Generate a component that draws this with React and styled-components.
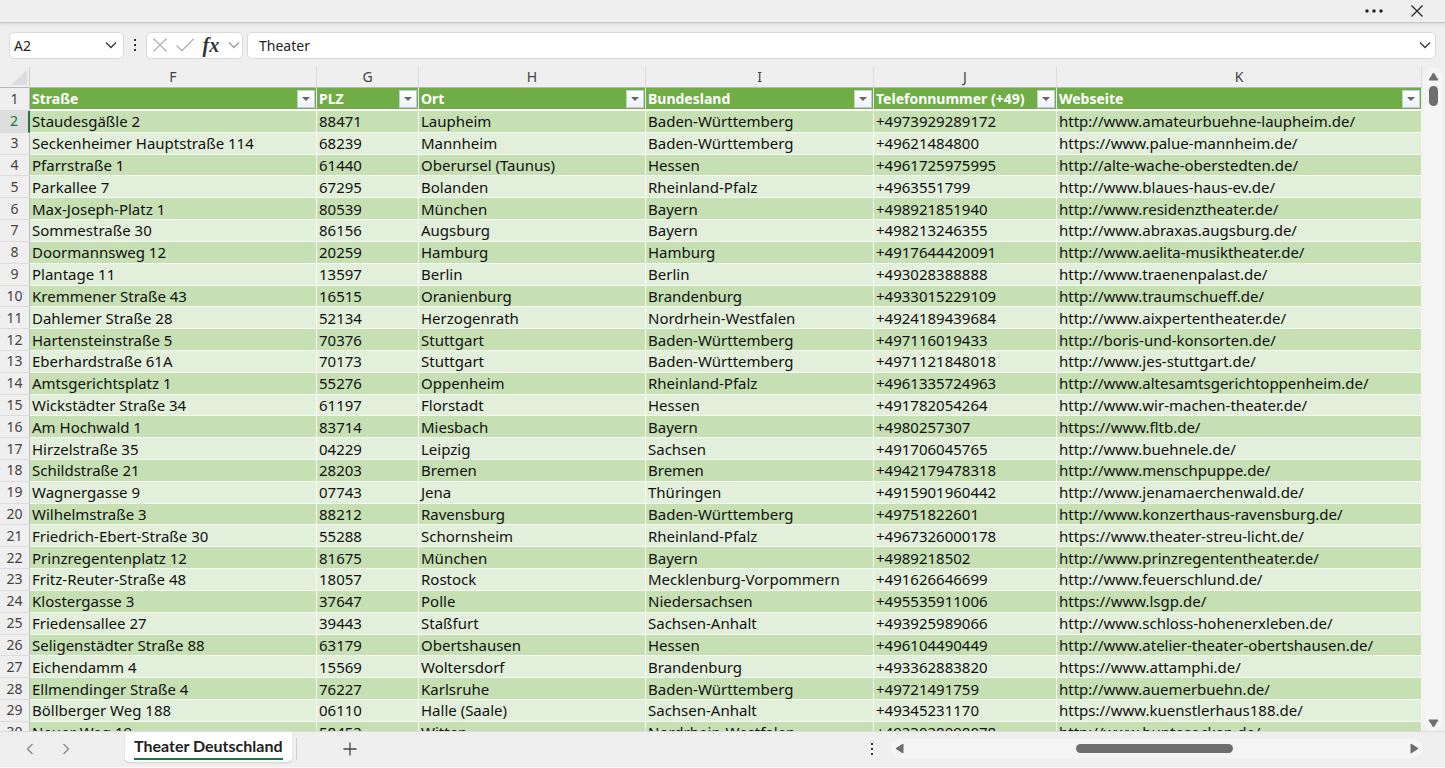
import React from "react";
import styled, { createGlobalStyle } from "styled-components";

const GlobalStyle = createGlobalStyle`
  * {
    box-sizing: border-box;
  }
  body {
    margin: 0;
    background: #efefef;
    font-family: "Noto Sans", "Open Sans", sans-serif;
  }
  button, input {
    font: inherit;
    color: inherit;
    border: none;
    background: none;
    padding: 0;
    outline: none;
  }
`;

const columns = [
  { letter: "F", name: "Straße", width: 287 },
  { letter: "G", name: "PLZ", width: 102 },
  { letter: "H", name: "Ort", width: 227 },
  { letter: "I", name: "Bundesland", width: 228 },
  { letter: "J", name: "Telefonnummer (+49)", width: 183 },
  { letter: "K", name: "Webseite" },
];

const rows = [
  ["Staudesgäßle 2", "88471", "Laupheim", "Baden-Württemberg", "+4973929289172", "http://www.amateurbuehne-laupheim.de/"],
  ["Seckenheimer Hauptstraße 114", "68239", "Mannheim", "Baden-Württemberg", "+49621484800", "https://www.palue-mannheim.de/"],
  ["Pfarrstraße 1", "61440", "Oberursel (Taunus)", "Hessen", "+4961725975995", "http://alte-wache-oberstedten.de/"],
  ["Parkallee 7", "67295", "Bolanden", "Rheinland-Pfalz", "+4963551799", "http://www.blaues-haus-ev.de/"],
  ["Max-Joseph-Platz 1", "80539", "München", "Bayern", "+498921851940", "http://www.residenztheater.de/"],
  ["Sommestraße 30", "86156", "Augsburg", "Bayern", "+498213246355", "http://www.abraxas.augsburg.de/"],
  ["Doormannsweg 12", "20259", "Hamburg", "Hamburg", "+4917644420091", "http://www.aelita-musiktheater.de/"],
  ["Plantage 11", "13597", "Berlin", "Berlin", "+493028388888", "http://www.traenenpalast.de/"],
  ["Kremmener Straße 43", "16515", "Oranienburg", "Brandenburg", "+4933015229109", "http://www.traumschueff.de/"],
  ["Dahlemer Straße 28", "52134", "Herzogenrath", "Nordrhein-Westfalen", "+4924189439684", "http://www.aixpertentheater.de/"],
  ["Hartensteinstraße 5", "70376", "Stuttgart", "Baden-Württemberg", "+497116019433", "http://boris-und-konsorten.de/"],
  ["Eberhardstraße 61A", "70173", "Stuttgart", "Baden-Württemberg", "+4971121848018", "http://www.jes-stuttgart.de/"],
  ["Amtsgerichtsplatz 1", "55276", "Oppenheim", "Rheinland-Pfalz", "+4961335724963", "http://www.altesamtsgerichtoppenheim.de/"],
  ["Wickstädter Straße 34", "61197", "Florstadt", "Hessen", "+491782054264", "http://www.wir-machen-theater.de/"],
  ["Am Hochwald 1", "83714", "Miesbach", "Bayern", "+4980257307", "https://www.fltb.de/"],
  ["Hirzelstraße 35", "04229", "Leipzig", "Sachsen", "+491706045765", "http://www.buehnele.de/"],
  ["Schildstraße 21", "28203", "Bremen", "Bremen", "+4942179478318", "http://www.menschpuppe.de/"],
  ["Wagnergasse 9", "07743", "Jena", "Thüringen", "+4915901960442", "http://www.jenamaerchenwald.de/"],
  ["Wilhelmstraße 3", "88212", "Ravensburg", "Baden-Württemberg", "+49751822601", "http://www.konzerthaus-ravensburg.de/"],
  ["Friedrich-Ebert-Straße 30", "55288", "Schornsheim", "Rheinland-Pfalz", "+4967326000178", "https://www.theater-streu-licht.de/"],
  ["Prinzregentenplatz 12", "81675", "München", "Bayern", "+4989218502", "http://www.prinzregententheater.de/"],
  ["Fritz-Reuter-Straße 48", "18057", "Rostock", "Mecklenburg-Vorpommern", "+491626646699", "http://www.feuerschlund.de/"],
  ["Klostergasse 3", "37647", "Polle", "Niedersachsen", "+495535911006", "https://www.lsgp.de/"],
  ["Friedensallee 27", "39443", "Staßfurt", "Sachsen-Anhalt", "+493925989066", "http://www.schloss-hohenerxleben.de/"],
  ["Seligenstädter Straße 88", "63179", "Obertshausen", "Hessen", "+496104490449", "http://www.atelier-theater-obertshausen.de/"],
  ["Eichendamm 4", "15569", "Woltersdorf", "Brandenburg", "+493362883820", "https://www.attamphi.de/"],
  ["Ellmendinger Straße 4", "76227", "Karlsruhe", "Baden-Württemberg", "+49721491759", "http://www.auemerbuehn.de/"],
  ["Böllberger Weg 188", "06110", "Halle (Saale)", "Sachsen-Anhalt", "+49345231170", "https://www.kuenstlerhaus188.de/"],
  ["Neuer Weg 19", "58452", "Witten", "Nordrhein-Westfalen", "+4923028098078", "http://www.buntesocken.de/"],
];

const Chevron = ({ direction = "down", size = 12, color = "#333" }) => {
  const paths = {
    down: "M1 3.5 L6 8.5 L11 3.5",
    left: "M8.5 1 L3.5 6 L8.5 11",
    right: "M3.5 1 L8.5 6 L3.5 11",
  };
  return (
    <svg width={size} height={size} viewBox="0 0 12 12" fill="none">
      <path d={paths[direction]} stroke={color} strokeWidth="1.3" />
    </svg>
  );
};

const Arrow = ({ points, width = 11, height = 9 }) => (
  <svg width={width} height={height} viewBox={`0 0 ${width} ${height}`}>
    <polygon points={points} fill="#6e6e6e" stroke="#6e6e6e" strokeLinejoin="round" />
  </svg>
);

const VerticalDots = () => (
  <svg width="4" height="14" viewBox="0 0 4 14" fill="#333">
    <rect x="1" y="1" width="2" height="2" />
    <rect x="1" y="6" width="2" height="2" />
    <rect x="1" y="11" width="2" height="2" />
  </svg>
);

function TitleBar() {
  return (
    <TitleBarBox>
      <IconButton aria-label="Mehr">
        <svg width="18" height="4" viewBox="0 0 18 4" fill="#222">
          <circle cx="2" cy="2" r="1.7" />
          <circle cx="9" cy="2" r="1.7" />
          <circle cx="16" cy="2" r="1.7" />
        </svg>
      </IconButton>
      <IconButton aria-label="Schließen">
        <svg width="12" height="12" viewBox="0 0 12 12" stroke="#222" strokeWidth="1.2">
          <path d="M0.5 0.5 L11.5 11.5 M11.5 0.5 L0.5 11.5" />
        </svg>
      </IconButton>
    </TitleBarBox>
  );
}

function FormulaBar() {
  return (
    <FormulaBarBox>
      <NameBox>
        <BarInput aria-label="Namenfeld" defaultValue="A2" />
        <IconButton aria-label="Namen anzeigen">
          <Chevron />
        </IconButton>
      </NameBox>
      <VerticalDots />
      <FormulaTools>
        <IconButton aria-label="Abbrechen">
          <svg width="14" height="14" viewBox="0 0 14 14" stroke="#b0b0b0" strokeWidth="1.3">
            <path d="M0.5 0.5 L13.5 13.5 M13.5 0.5 L0.5 13.5" />
          </svg>
        </IconButton>
        <IconButton aria-label="Eingeben">
          <svg width="18" height="14" viewBox="0 0 18 14" fill="none" stroke="#b0b0b0" strokeWidth="1.3">
            <path d="M0.5 7.5 L6 12.5 L17.5 1" />
          </svg>
        </IconButton>
        <FxButton aria-label="Funktion einfügen">fx</FxButton>
        <IconButton aria-label="Funktionen">
          <Chevron color="#999" />
        </IconButton>
      </FormulaTools>
      <FormulaField>
        <BarInput aria-label="Bearbeitungsleiste" defaultValue="Theater" />
        <IconButton aria-label="Bearbeitungsleiste erweitern">
          <Chevron />
        </IconButton>
      </FormulaField>
    </FormulaBarBox>
  );
}

function Sheet() {
  return (
    <SheetArea>
      <Viewport>
        <Table>
          <colgroup>
            <Col $width={30} />
            {columns.map((column) => (
              <Col key={column.letter} $width={column.width} />
            ))}
          </colgroup>
          <thead>
            <tr>
              <Corner>
                <svg width="16" height="15" viewBox="0 0 16 15" fill="#dcdcdc">
                  <polygon points="16,0 16,15 0,15" />
                </svg>
              </Corner>
              {columns.map((column) => (
                <ColumnLetter key={column.letter}>{column.letter}</ColumnLetter>
              ))}
            </tr>
            <tr>
              <RowNumber>1</RowNumber>
              {columns.map((column) => (
                <HeaderCell key={column.letter}>
                  <HeaderContent>
                    {column.name}
                    <FilterButton aria-label={`${column.name} filtern`}>
                      <svg width="8" height="4" viewBox="0 0 8 4" fill="#666">
                        <polygon points="0,0 8,0 4,4" />
                      </svg>
                    </FilterButton>
                  </HeaderContent>
                </HeaderCell>
              ))}
            </tr>
          </thead>
          <tbody>
            {rows.map((row, index) => (
              <BodyRow key={row[4]}>
                <RowNumber $selected={index === 0}>{index + 2}</RowNumber>
                {row.map((value, i) => (
                  <Cell key={columns[i].letter}>{value}</Cell>
                ))}
              </BodyRow>
            ))}
          </tbody>
        </Table>
      </Viewport>
      <VerticalScroll>
        <IconButton aria-label="Nach oben">
          <Arrow points="5.5,1 10,8 1,8" />
        </IconButton>
        <VerticalThumb />
        <IconButton aria-label="Nach unten">
          <Arrow points="1,1 10,1 5.5,8" />
        </IconButton>
      </VerticalScroll>
    </SheetArea>
  );
}

function TabBar() {
  return (
    <TabBarBox>
      <SheetNav>
        <IconButton aria-label="Vorheriges Blatt">
          <Chevron direction="left" color="#888" />
        </IconButton>
        <IconButton aria-label="Nächstes Blatt">
          <Chevron direction="right" color="#888" />
        </IconButton>
      </SheetNav>
      <SheetTab>
        <span>Theater Deutschland</span>
      </SheetTab>
      <TabDivider />
      <AddButton aria-label="Neues Blatt">
        <svg width="14" height="14" viewBox="0 0 14 14" stroke="#444" strokeWidth="1.3">
          <path d="M7 0.5 V13.5 M0.5 7 H13.5" />
        </svg>
      </AddButton>
      <Spacer />
      <VerticalDots />
      <HorizontalScroll>
        <IconButton aria-label="Nach links">
          <Arrow width={9} height={11} points="8,1 8,10 1,5.5" />
        </IconButton>
        <Track>
          <HorizontalThumb />
        </Track>
        <IconButton aria-label="Nach rechts">
          <Arrow width={9} height={11} points="1,1 1,10 8,5.5" />
        </IconButton>
      </HorizontalScroll>
    </TabBarBox>
  );
}

function App() {
  return (
    <Page>
      <GlobalStyle />
      <TitleBar />
      <FormulaBar />
      <Sheet />
      <TabBar />
    </Page>
  );
}

export default App;

const Page = styled.div`
  display: flex;
  flex-direction: column;
  height: 100vh;
  overflow: hidden;
  color: #222;
`;

const IconButton = styled.button`
  display: flex;
  align-items: center;
  justify-content: center;
  flex: none;
`;

const TitleBarBox = styled.header`
  display: flex;
  align-items: center;
  justify-content: flex-end;
  gap: 28px;
  height: 23px;
  padding: 0 22px;
  border-bottom: 1px solid #c6c6c6;
  box-shadow: 0 1px 3px #d4d4d4;
`;

const FormulaBarBox = styled.div`
  display: flex;
  align-items: center;
  height: 44px;
  padding: 0 9px;
  font-size: 14px;
`;

const Field = styled.div`
  display: flex;
  align-items: center;
  height: 27px;
  background: #fff;
  border: 1px solid #dadada;
  border-radius: 5px;
`;

const NameBox = styled(Field)`
  width: 115px;
  margin-right: 9px;
  padding: 0 6px 0 4px;
`;

const FormulaTools = styled(Field)`
  justify-content: space-between;
  width: 97px;
  margin: 0 4px 0 9px;
  padding: 0 2px 0 6px;
`;

const FormulaField = styled(Field)`
  flex: 1;
  padding: 0 4px 0 11px;
`;

const BarInput = styled.input`
  flex: 1;
  min-width: 0;
  height: 100%;
`;

const FxButton = styled.button`
  color: #333;
  font-family: "Liberation Serif", serif;
  font-size: 20px;
  font-style: italic;
  font-weight: 700;
  line-height: 20px;
`;

const SheetArea = styled.main`
  display: flex;
  flex: 1;
  min-height: 0;
`;

const Viewport = styled.div`
  flex: 1;
  min-width: 0;
  overflow: hidden;
`;

/* the last row runs past the lower edge of the viewport */
const Table = styled.table`
  width: 100%;
  height: calc(100% + 13px);
  table-layout: fixed;
  border-collapse: separate;
  border-spacing: 0;
  font-size: 14px;
  line-height: 20px;
  white-space: nowrap;
`;

const Col = styled.col`
  width: ${({ $width }) => ($width ? `${$width}px` : "auto")};
`;

const Corner = styled.td`
  height: 21px;
  padding: 0 2px 0 0;
  text-align: right;
  vertical-align: bottom;
  border-right: 1px solid #d0d0d0;
  border-bottom: 1px solid #b8b8b8;

  svg {
    display: block;
    margin: 0 0 2px auto;
  }
`;

const ColumnLetter = styled.th`
  padding: 0;
  color: #444;
  font-weight: 400;
  border-right: 1px solid #dcdcdc;
  border-bottom: 1px solid #b8b8b8;
`;

const RowNumber = styled.th`
  padding: 0;
  color: ${({ $selected }) => ($selected ? "#217346" : "#444")};
  background: ${({ $selected }) => ($selected ? "#dedede" : "#efefef")};
  font-weight: 400;
  text-align: center;
  border-right: ${({ $selected }) => ($selected ? "2px solid #217346" : "1px solid #c0c0c0")};
  border-bottom: 1px solid #dcdcdc;
`;

const HeaderCell = styled.th`
  height: 23px;
  padding: 0 1px 0 2px;
  color: #fff;
  background: #70ad47;
  text-align: left;
  border-right: 1px solid #e8f2e0;
  border-bottom: 2px solid #fff;
`;

const HeaderContent = styled.div`
  display: flex;
  align-items: center;
  justify-content: space-between;
`;

const FilterButton = styled.button`
  display: flex;
  align-items: center;
  justify-content: center;
  width: 18px;
  height: 18px;
  background: linear-gradient(#fff, #eef1f8);
  border: 1px solid #c3cbdc;
`;

const Cell = styled.td`
  padding: 0 2px;
  color: #111;
  font-size: 15px;
  overflow: hidden;
  border-right: 1px solid #f6faf3;
  border-bottom: 1px solid #f6faf3;
`;

const BodyRow = styled.tr`
  background: #e2efda;

  &:nth-child(odd) {
    background: #c6e0b4;
  }
`;

const VerticalScroll = styled.div`
  display: flex;
  flex-direction: column;
  align-items: center;
  gap: 5px;
  width: 20px;
  margin: 0 2px 0 1px;
  padding: 5px 0 3px;
  background: #f5f5f5;
  border-radius: 10px;

  button:last-child {
    margin-top: auto;
  }
`;

const VerticalThumb = styled.div`
  width: 9px;
  height: 20px;
  background: #6e6e6e;
  border-radius: 5px;
`;

const TabBarBox = styled.footer`
  display: flex;
  align-items: center;
  height: 37px;
  padding: 0 22px 2px 24px;
  border-top: 1px solid #dcdcdc;
  border-bottom: 1px solid #fafafa;
`;

const SheetNav = styled.nav`
  display: flex;
  gap: 24px;
  width: 101px;
`;

const SheetTab = styled.button`
  align-self: flex-start;
  height: 30px;
  padding: 0 9px;
  background: #fff;
  border-radius: 0 0 5px 5px;
  box-shadow: 0 1px 2px #d0d0d0;
  font-family: "Lato", sans-serif;
  font-size: 16px;
  font-weight: 700;

  span {
    display: block;
    line-height: 24px;
    border-bottom: 2px solid #107c41;
  }
`;

const TabDivider = styled.div`
  width: 1px;
  height: 22px;
  margin-left: 4px;
  background: #d0d0d0;
`;

const AddButton = styled(IconButton)`
  margin-left: 46px;
`;

const Spacer = styled.div`
  flex: 1;
`;

const HorizontalScroll = styled.div`
  display: flex;
  align-items: center;
  width: 38%;
  height: 19px;
  margin-left: 17px;
  padding: 0 4px;
  background: #f5f5f5;
  border-radius: 10px;
`;

const Track = styled.div`
  flex: 1;
`;

const HorizontalThumb = styled.div`
  width: 31%;
  height: 9px;
  margin-left: 34%;
  background: #6e6e6e;
  border-radius: 5px;
`;
